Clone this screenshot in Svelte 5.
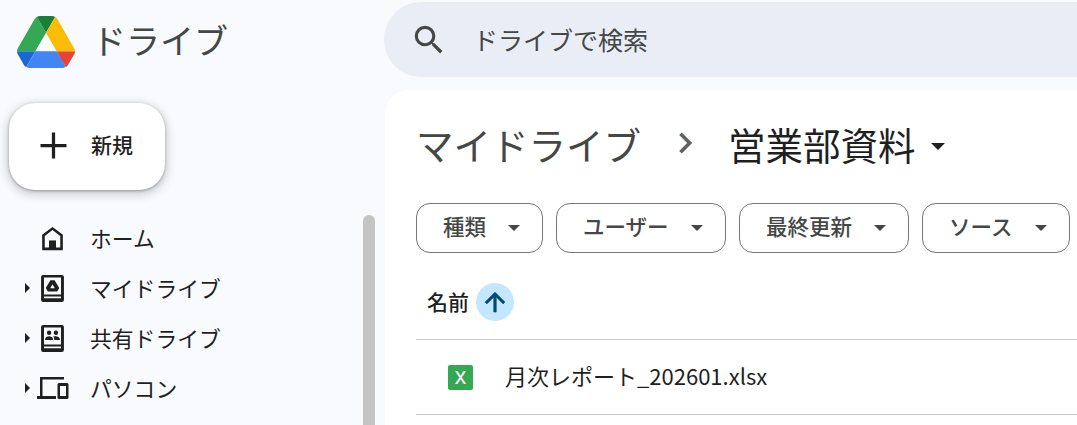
<script>
  const nav = [
    { label: 'ホーム', icon: 'home', arrow: false },
    { label: 'マイドライブ', icon: 'drive', arrow: true },
    { label: '共有ドライブ', icon: 'shared', arrow: true },
    { label: 'パソコン', icon: 'pc', arrow: true }
  ];
  const filters = [
    { label: '種類', w: 127 },
    { label: 'ユーザー', w: 170 },
    { label: '最終更新', w: 170 },
    { label: 'ソース', w: 148 }
  ];
</script>

<div class="page">
  <header class="topbar">
    <div class="brand">
      <svg class="logo" viewBox="0 0 87.3 78" width="58" height="52" aria-hidden="true">
        <path d="m6.6 66.85 3.85 6.65c.8 1.4 1.95 2.5 3.3 3.3l13.75-23.8h-27.5c0 1.55.4 3.1 1.2 4.5z" fill="#1967d2"/>
        <path d="m43.65 25-13.75-23.8c-1.35.8-2.5 1.9-3.3 3.3l-25.4 44a9.06 9.06 0 0 0 -1.2 4.5h27.5z" fill="#34a853"/>
        <path d="m73.55 76.8c1.35-.8 2.5-1.9 3.3-3.3l1.6-2.75 7.65-13.25c.8-1.4 1.2-2.95 1.2-4.5h-27.502l5.852 11.5z" fill="#ea4335"/>
        <path d="m43.65 25 13.75-23.8c-1.35-.8-2.9-1.2-4.5-1.2h-18.5c-1.6 0-3.15.45-4.5 1.2z" fill="#188038"/>
        <path d="m59.8 53h-32.3l-13.75 23.8c1.35.8 2.9 1.2 4.5 1.2h50.8c1.6 0 3.15-.45 4.5-1.2z" fill="#4285f4"/>
        <path d="m73.4 26.5-12.7-22c-.8-1.4-1.95-2.5-3.3-3.3l-13.75 23.8 16.15 28h27.45c0-1.55-.4-3.1-1.2-4.5z" fill="#fbbc04"/>
      </svg>
      <span class="brand-name">ドライブ</span>
    </div>
    <div class="search">
      <svg class="search-icon" viewBox="0 0 24 24" width="38" height="38" aria-hidden="true">
        <path d="M15.5 14h-.79l-.28-.27A6.471 6.471 0 0 0 16 9.5 6.5 6.5 0 1 0 9.5 16c1.61 0 3.09-.59 4.23-1.57l.27.28v.79l5 4.99L20.49 19l-4.99-5zm-6 0C7.01 14 5 11.99 5 9.5S7.01 5 9.5 5 14 7.01 14 9.5 11.99 14 9.5 14z" fill="#444746"/>
      </svg>
      <span class="search-text">ドライブで検索</span>
    </div>
  </header>

  <div class="body">
    <aside class="sidebar">
      <button class="new-btn">
        <svg viewBox="0 0 24 24" width="39" height="39" aria-hidden="true">
          <path d="M20 13h-7v7h-2v-7H4v-2h7V4h2v7h7z" fill="#1f1f1f"/>
        </svg>
        <span>新規</span>
      </button>
      <div class="nav-wrap">
        <nav class="nav">
          {#each nav as item}
            <div class="nav-row">
              <span class="arrow-slot">
                {#if item.arrow}<span class="arrow"></span>{/if}
              </span>
              <span class="nav-icon">
                {#if item.icon === 'home'}
                  <svg viewBox="0 0 24 24" width="31" height="31" aria-hidden="true">
                    <path fill-rule="evenodd" d="M12 3 4 9v12h16V9l-8-6zm0 2.500L18 10v9H6v-9l6-4.500z" fill="#1f1f1f"/>
                    <rect x="9.300" y="13.500" width="5.400" height="6" fill="#1f1f1f"/>
                  </svg>
                {:else if item.icon === 'drive'}
                  <svg viewBox="0 0 24 26" width="25" height="27" aria-hidden="true">
                    <path fill-rule="evenodd" d="M3 0h18a2 2 0 0 1 2 2v22a2 2 0 0 1-2 2H3a2 2 0 0 1-2-2V2a2 2 0 0 1 2-2zm.8 2.500v16.200h16.400V2.500H3.800zm0 18.100v1.900h16.400v-1.900H3.800z" fill="#1f1f1f"/>
                    <path fill-rule="evenodd" d="M10 5h4l4.500 7.500L16.500 16h-9l-2-3.500L10 5zm2 4-2.200 3.800h4.400L12 9z" fill="#1f1f1f"/>
                  </svg>
                {:else if item.icon === 'shared'}
                  <svg viewBox="0 0 24 26" width="25" height="27" aria-hidden="true">
                    <path fill-rule="evenodd" d="M3 0h18a2 2 0 0 1 2 2v22a2 2 0 0 1-2 2H3a2 2 0 0 1-2-2V2a2 2 0 0 1 2-2zm.8 2.500v16.200h16.400V2.500H3.800zm0 18.100v1.900h16.400v-1.900H3.800z" fill="#1f1f1f"/>
                    <circle cx="8.700" cy="7.500" r="2.100" fill="#1f1f1f"/>
                    <circle cx="15.300" cy="7.500" r="2.100" fill="#1f1f1f"/>
                    <path d="M5 14.500v-1.300c0-1.500 2-2.400 3.700-2.400s3.700.9 3.700 2.400v1.300H5zm8.600 0v-1.300c0-.9-.4-1.600-1-2.100.8-.2 1.500-.3 2.400-.3 1.700 0 4 .9 4 2.400v1.300h-5.400z" fill="#1f1f1f"/>
                  </svg>
                {:else}
                  <svg viewBox="0 0 32 22" width="32" height="22" aria-hidden="true">
                    <path d="M3 0h24v2.500H5.500V19H19v3H0v-3h3V0z" fill="#1f1f1f"/>
                    <path fill-rule="evenodd" d="M22 6h8a1.500 1.500 0 0 1 1.500 1.500v13A1.500 1.500 0 0 1 30 22h-8a1.500 1.500 0 0 1-1.500-1.500v-13A1.500 1.500 0 0 1 22 6zm1 3v10h6V9h-6z" fill="#1f1f1f"/>
                  </svg>
                {/if}
              </span>
              <span class="nav-label">{item.label}</span>
            </div>
          {/each}
        </nav>
        <div class="scrollbar"></div>
      </div>
    </aside>

    <main class="card">
      <div class="crumbs">
        <span class="crumb-root">マイドライブ</span>
        <svg class="crumb-sep" viewBox="0 0 24 24" width="44" height="44" aria-hidden="true">
          <path d="M9.700 6.300 8.300 7.700 12.600 12l-4.300 4.300 1.400 1.400L15.400 12z" fill="#5f6368"/>
        </svg>
        <span class="crumb-current">営業部資料</span>
        <span class="crumb-caret"></span>
      </div>

      <div class="filters">
        {#each filters as f}
          <button class="chip" style="width: {f.w}px">
            <span class="chip-label">{f.label}</span>
            <span class="chip-caret"></span>
          </button>
        {/each}
      </div>

      <div class="list-head">
        <span class="col-name">名前</span>
        <span class="sort">
          <svg viewBox="0 0 24 24" width="30" height="30" aria-hidden="true">
            <path d="M13 20h-2V8l-5.500 5.500-1.420-1.420L12 4.160l7.920 7.920-1.420 1.420L13 8v12z" fill="#004a77" stroke="#004a77" stroke-width="0.500"/>
          </svg>
        </span>
      </div>

      <div class="file-row">
        <span class="xl-icon">X</span>
        <span class="file-name">月次レポート_202601.xlsx</span>
      </div>
    </main>
  </div>
</div>

<style>
  :global(body) {
    margin: 0;
    background: #f8fafd;
  }
  .page {
    width: 1077px;
    height: 425px;
    overflow: hidden;
    background: #f8fafd;
    font-family: "Noto Sans CJK JP", Roboto, "Noto Sans", sans-serif;
    color: #1f1f1f;
    display: flex;
    flex-direction: column;
  }
  .topbar {
    display: flex;
    height: 90px;
    flex: none;
    align-items: flex-start;
  }
  .brand {
    width: 384px;
    flex: none;
    display: flex;
    align-items: center;
    gap: 17px;
    padding: 13px 0 0 17px;
    box-sizing: border-box;
  }
  .logo {
    flex: none;
  }
  .brand-name {
    font-size: 34px;
    line-height: 54px;
    color: #444746;
    margin-bottom: 3px;
  }
  .search {
    flex: 1;
    height: 75px;
    margin-top: 2px;
    background: #e9eef6;
    border-radius: 37px 0 0 37px;
    display: flex;
    align-items: center;
    padding-left: 26px;
    gap: 25px;
  }
  .search-text {
    font-size: 25px;
    color: #444746;
    margin-bottom: 2px;
  }
  .body {
    flex: 1;
    display: flex;
    min-height: 0;
  }
  .sidebar {
    width: 385px;
    flex: none;
    padding: 13px 0 0 9px;
    box-sizing: border-box;
  }
  .new-btn {
    width: 156px;
    height: 87px;
    border: none;
    border-radius: 26px;
    background: #fff;
    box-shadow: 0 1px 3px rgba(0,0,0,.3), 0 3px 8px 3px rgba(0,0,0,.15);
    display: flex;
    align-items: center;
    padding: 0 0 0 25px;
    gap: 18px;
    font: inherit;
    font-size: 21px;
    font-weight: 500;
    color: #1f1f1f;
  }
  .new-btn svg {
    margin-bottom: 2px;
  }
  .new-btn span {
    margin-bottom: 5px;
  }
  .nav-wrap {
    display: flex;
    justify-content: space-between;
    margin-top: 23px;
    padding-right: 10px;
  }
  .nav-row {
    display: flex;
    align-items: center;
    height: 50px;
    font-size: 21.800px;
  }
  .arrow-slot {
    width: 21px;
    display: flex;
    justify-content: flex-end;
  }
  .arrow {
    width: 0;
    height: 0;
    border-left: 5px solid #1f1f1f;
    border-top: 5px solid transparent;
    border-bottom: 5px solid transparent;
  }
  .nav-icon {
    width: 45px;
    display: flex;
    justify-content: center;
  }
  .nav-label {
    margin-left: 15px;
    margin-bottom: 2px;
  }
  .scrollbar {
    width: 12px;
    height: 260px;
    margin-top: 2px;
    background: #c4c4c4;
    border-radius: 6px 6px 0 0;
  }
  .card {
    flex: 1;
    background: #fff;
    border-radius: 24px 0 0 0;
    padding: 0 0 0 31px;
    min-width: 0;
  }
  .crumbs {
    display: flex;
    align-items: center;
    height: 106px;
    white-space: nowrap;
  }
  .crumb-root {
    font-size: 37.500px;
    color: #444746;
  }
  .crumb-sep {
    flex: none;
    margin: 0 20px 0 23px;
  }
  .crumb-current {
    font-size: 37.500px;
    color: #1f1f1f;
  }
  .crumb-caret {
    width: 0;
    height: 0;
    border-top: 7px solid #1f1f1f;
    border-left: 7px solid transparent;
    border-right: 7px solid transparent;
    margin-left: 15px;
    margin-top: 6px;
  }
  .filters {
    display: flex;
    gap: 13px;
    margin-top: 7px;
    white-space: nowrap;
  }
  .chip {
    flex: none;
    height: 50px;
    box-sizing: border-box;
    border: 1px solid #747775;
    border-radius: 14px;
    background: #fff;
    display: flex;
    align-items: center;
    justify-content: space-between;
    padding: 0 22px 0 26px;
    font: inherit;
    font-size: 21.500px;
    font-weight: 500;
    color: #444746;
  }
  .chip-label {
    margin-bottom: 5px;
  }
  .chip-caret {
    width: 0;
    height: 0;
    border-top: 6px solid #444746;
    border-left: 6px solid transparent;
    border-right: 6px solid transparent;
  }
  .list-head {
    display: flex;
    align-items: center;
    height: 87px;
    box-sizing: border-box;
    border-bottom: 1px solid #c7c7c7;
    padding: 12px 0 0 11px;
    gap: 7px;
    font-size: 21px;
    font-weight: 500;
  }
  .col-name {
    margin-bottom: 2px;
  }
  .sort {
    width: 38px;
    height: 38px;
    border-radius: 50%;
    background: #c2e7ff;
    display: flex;
    align-items: center;
    justify-content: center;
  }
  .file-row {
    display: flex;
    align-items: center;
    height: 75px;
    box-sizing: border-box;
    border-bottom: 1px solid #c7c7c7;
    padding-left: 32px;
    gap: 32px;
    font-size: 22px;
  }
  .xl-icon {
    width: 25px;
    height: 25px;
    border-radius: 2px;
    background: #34a853;
    color: #fff;
    font-family: Roboto, sans-serif;
    font-size: 19px;
    line-height: 25px;
    text-align: center;
    font-weight: 400;
  }
  .file-name {
    white-space: nowrap;
    margin-bottom: 4px;
  }
</style>
